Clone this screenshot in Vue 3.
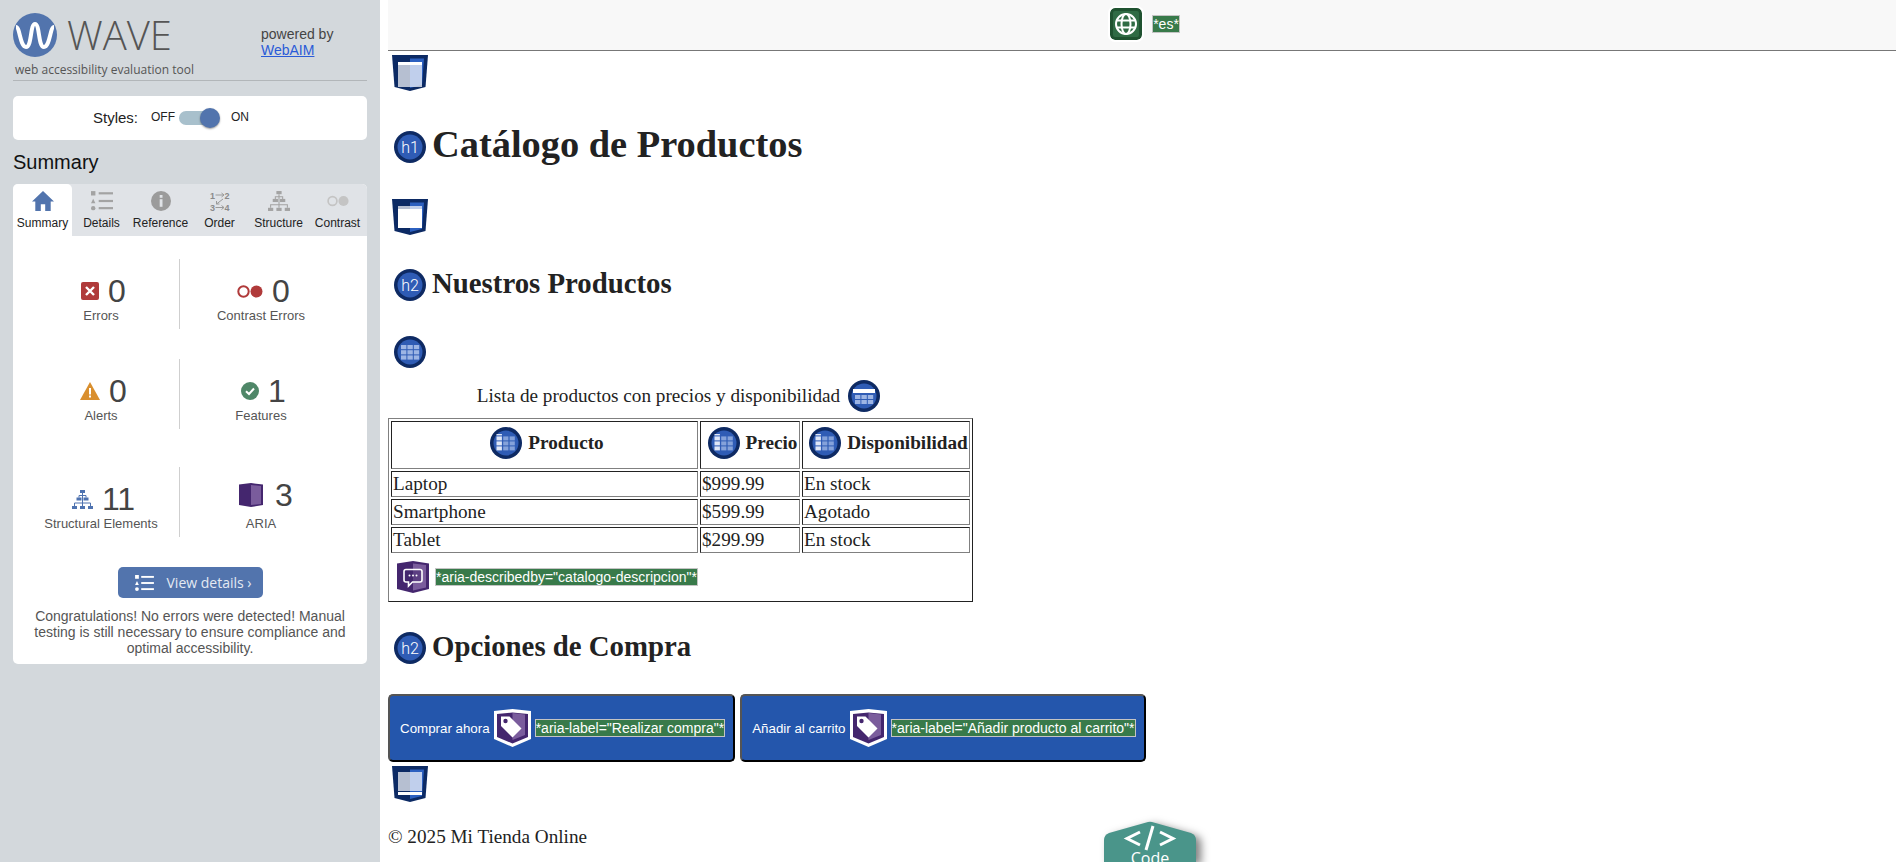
<script setup>
const tabs = [
  { label: 'Summary', icon: 'i-home', active: true },
  { label: 'Details', icon: 'i-list' },
  { label: 'Reference', icon: 'i-info' },
  { label: 'Order', icon: 'i-order' },
  { label: 'Structure', icon: 'i-tree' },
  { label: 'Contrast', icon: 'i-contrast' }
]
const stats = [
  { n: '0', label: 'Errors', icon: 'i-error', w: 18, h: 18 },
  { n: '0', label: 'Contrast Errors', icon: 'i-cerror', w: 26, h: 13 },
  { n: '0', label: 'Alerts', icon: 'i-alert', w: 20, h: 18 },
  { n: '1', label: 'Features', icon: 'i-feature', w: 18, h: 18 },
  { n: '11', label: 'Structural Elements', icon: 'i-tree-blue', w: 21, h: 19, last: true },
  { n: '3', label: 'ARIA', icon: 'i-aria', w: 24, h: 24, last: true, raised: true }
]
const rows = [
  ['Laptop', '$999.99', 'En stock'],
  ['Smartphone', '$599.99', 'Agotado'],
  ['Tablet', '$299.99', 'En stock']
]
const heads = [{ t: 'Producto', w: 305 }, { t: 'Precio', w: 98 }, { t: 'Disponibilidad', w: 166 }]
</script>

<template>
  <div class="page">
    <svg class="defs" width="0" height="0" aria-hidden="true">
      <defs>
        <symbol id="i-home" viewBox="0 0 20 18">
          <path d="M10 0L20 9.5H17V18H12V12H8V18H3V9.5H0Z" fill="#5274ad" />
        </symbol>
        <symbol id="i-list" viewBox="0 0 20 18" fill="#a3a3a3">
          <rect x="0" y="0" width="4" height="4" />
          <path d="M2 7L4 11H0Z" />
          <circle cx="2" cy="15.5" r="2" />
          <rect x="7" y="1" width="13" height="2" />
          <rect x="7" y="8" width="13" height="2" />
          <rect x="7" y="14.5" width="13" height="2" />
        </symbol>
        <symbol id="i-info" viewBox="0 0 20 20">
          <circle cx="10" cy="10" r="10" fill="#9b9b9b" />
          <rect x="8.7" y="4" width="2.8" height="2.8" fill="#e0e3e7" />
          <rect x="8.7" y="8.2" width="2.8" height="7.6" fill="#e0e3e7" />
        </symbol>
        <symbol id="i-order" viewBox="0 0 20 20">
          <text x="0" y="7.5" class="ord">1</text>
          <text x="14.5" y="7.5" class="ord">2</text>
          <text x="0" y="20" class="ord">3</text>
          <text x="14.5" y="20" class="ord">4</text>
          <path d="M5.5 4H14M11.5 2L14 4L11.5 6M5.5 16.5H14M11.5 14.5L14 16.5L11.5 18.5M13 8L6.5 13M6.5 10V13H9.5" fill="none" stroke="#9a9a9a" stroke-width="1" />
        </symbol>
        <symbol id="i-tree" viewBox="0 0 21 19">
          <g fill="#a3a3a3">
            <rect x="8" y="0" width="5" height="3" /><rect x="4.5" y="7.5" width="5" height="3" /><rect x="11.5" y="7.5" width="5" height="3" />
            <rect x="0" y="16" width="5" height="3" /><rect x="8" y="16" width="5" height="3" /><rect x="16" y="16" width="5" height="3" />
          </g>
          <path d="M10.5 3V16M7 7.5V5.5H14V7.5M2.5 16V13H18.5V16" fill="none" stroke="#a3a3a3" />
        </symbol>
        <symbol id="i-tree-blue" viewBox="0 0 21 19">
          <g fill="#4f73b0">
            <rect x="8" y="0" width="5" height="3" /><rect x="4.5" y="7.5" width="5" height="3" /><rect x="11.5" y="7.5" width="5" height="3" />
            <rect x="0" y="16" width="5" height="3" /><rect x="8" y="16" width="5" height="3" /><rect x="16" y="16" width="5" height="3" />
          </g>
          <path d="M10.5 3V16M7 7.5V5.5H14V7.5M2.5 16V13H18.5V16" fill="none" stroke="#4f73b0" />
        </symbol>
        <symbol id="i-contrast" viewBox="0 0 26 13">
          <circle cx="6.5" cy="6.5" r="5.2" fill="none" stroke="#c4c4c4" stroke-width="2" />
          <circle cx="19.5" cy="6.5" r="6" fill="#c4c4c4" />
        </symbol>
        <symbol id="i-error" viewBox="0 0 18 18">
          <rect width="18" height="18" rx="2" fill="#b03a3a" />
          <path d="M5 5L13 13M13 5L5 13" stroke="#fff" stroke-width="2.4" />
        </symbol>
        <symbol id="i-cerror" viewBox="0 0 26 13">
          <circle cx="6.5" cy="6.5" r="5.2" fill="none" stroke="#b03a3a" stroke-width="2" />
          <circle cx="19.5" cy="6.5" r="6" fill="#b03a3a" />
        </symbol>
        <symbol id="i-alert" viewBox="0 0 20 18">
          <path d="M10 0L20 18H0Z" fill="#d98f2e" />
          <rect x="9" y="6" width="2" height="6.5" fill="#fff" />
          <rect x="9" y="13.5" width="2" height="2" fill="#fff" />
        </symbol>
        <symbol id="i-feature" viewBox="0 0 18 18">
          <circle cx="9" cy="9" r="9" fill="#4f8768" />
          <path d="M5 9.2L8 12L13 6.5" fill="none" stroke="#fff" stroke-width="2" />
        </symbol>
        <symbol id="i-aria" viewBox="0 0 24 24">
          <path d="M0 1.5L12 0L24 1.5V22L12 24L0 22Z" fill="#44266e" />
          <path d="M12 2L22 3V21L12 22Z" fill="#7a5c9c" />
        </symbol>
        <symbol id="r-base" viewBox="0 0 36 36">
          <path d="M0 0H36L33.5 32L18 36L2.5 32Z" fill="#0c2a64" />
          <path d="M18 3.5H32L30 30L18 33Z" fill="#2c60c0" />
        </symbol>
        <symbol id="c-grid" viewBox="0 0 32 32">
          <circle cx="16" cy="16" r="16" fill="#0e2a63" />
          <circle cx="16" cy="16" r="12.5" fill="#2f5cb5" />
          <g fill="#9db5e4">
            <rect x="7" y="9" width="5.4" height="4.2" /><rect x="13.4" y="9" width="5.4" height="4.2" /><rect x="19.8" y="9" width="5.4" height="4.2" />
            <rect x="7" y="14.2" width="5.4" height="4.2" /><rect x="13.4" y="14.2" width="5.4" height="4.2" /><rect x="19.8" y="14.2" width="5.4" height="4.2" />
            <rect x="7" y="19.4" width="5.4" height="4.2" /><rect x="13.4" y="19.4" width="5.4" height="4.2" /><rect x="19.8" y="19.4" width="5.4" height="4.2" />
          </g>
        </symbol>
        <symbol id="c-cap" viewBox="0 0 32 32">
          <circle cx="16" cy="16" r="16" fill="#0e2a63" />
          <circle cx="16" cy="16" r="12.5" fill="#2f5cb5" />
          <rect x="5" y="9" width="22" height="4" fill="#fff" />
          <g fill="#9db5e4">
            <rect x="7" y="15" width="5.4" height="4" /><rect x="13.4" y="15" width="5.4" height="4" /><rect x="19.8" y="15" width="5.4" height="4" />
            <rect x="7" y="20" width="5.4" height="4" /><rect x="13.4" y="20" width="5.4" height="4" /><rect x="19.8" y="20" width="5.4" height="4" />
          </g>
        </symbol>
        <symbol id="c-th" viewBox="0 0 32 32">
          <circle cx="16" cy="16" r="16" fill="#0e2a63" />
          <circle cx="16" cy="16" r="12.5" fill="#2f5cb5" />
          <g fill="#dfe7f7">
            <rect x="6.5" y="7" width="5.4" height="1.4" /><rect x="6.5" y="9.4" width="5.4" height="4" /><rect x="6.5" y="14.4" width="5.4" height="4" /><rect x="6.5" y="19.4" width="5.4" height="4" />
          </g>
          <g fill="#85a2da">
            <rect x="13.2" y="9.4" width="5.2" height="4" /><rect x="19.6" y="9.4" width="5.2" height="4" />
            <rect x="13.2" y="14.4" width="5.2" height="4" /><rect x="19.6" y="14.4" width="5.2" height="4" />
            <rect x="13.2" y="19.4" width="5.2" height="4" /><rect x="19.6" y="19.4" width="5.2" height="4" />
          </g>
        </symbol>
        <symbol id="a-desc" viewBox="0 0 32 32">
          <path d="M0 2.5L16 0L32 2.5V28L16 32L0 28Z" fill="#44266e" />
          <path d="M16 2.5L29 4V26.5L16 29.5Z" fill="#7a5c9c" />
          <path d="M9 8.5H23A2 2 0 0 1 25 10.5V19A2 2 0 0 1 23 21H15.5L11.5 25V21H9A2 2 0 0 1 7 19V10.5A2 2 0 0 1 9 8.5Z" fill="#44266e" fill-opacity=".55" stroke="#fff" stroke-width="1.6" />
          <circle cx="12.5" cy="14.5" r="1" fill="#fff" /><circle cx="16" cy="14.5" r="1" fill="#fff" /><circle cx="19.5" cy="14.5" r="1" fill="#fff" />
        </symbol>
        <symbol id="a-tag" viewBox="0 0 39 38">
          <path d="M1 2L19.5 0L38 2V30L19.5 38L1 30Z" fill="#fff" />
          <path d="M4 5L19.5 3.5L35 5V28L19.5 34.5L4 28Z" fill="#44266e" />
          <path d="M19.5 4L32 5.5V26L19.5 31Z" fill="#7a5c9c" />
          <path d="M8 7.5H16.5L28.5 19.5L19.5 28.5L8 17Z" fill="#fff" />
          <circle cx="12.5" cy="12" r="2.2" fill="#44266e" />
        </symbol>
      </defs>
    </svg>

    <aside class="side">
      <div class="brand">
        <div class="brand-logo">
          <div class="logo-row">
            <svg class="logo" width="44" height="44" viewBox="0 0 44 44">
              <circle cx="22" cy="22" r="22" fill="#5274ad" />
              <path d="M3 14C7 14 7 34 13 34C19 34 17 11 22 11C27 11 25 34 31 34C37 34 37 14 41 14" fill="none" stroke="#fff" stroke-width="4" />
            </svg>
            <span class="wave">WAVE</span>
          </div>
          <div class="tagline">web accessibility evaluation tool</div>
        </div>
        <div class="powered">powered by<br /><a href="#">WebAIM</a></div>
      </div>

      <div class="styles-card">
        <span class="st-label">Styles:</span>
        <span class="st-off">OFF</span>
        <span class="toggle"><span class="knob"></span></span>
        <span class="st-on">ON</span>
      </div>

      <h2 class="summary-title">Summary</h2>

      <div class="card">
        <div class="tabs">
          <div v-for="t in tabs" :key="t.label" class="tab" :class="{ active: t.active }">
            <svg class="tab-icon" width="22" height="20"><use :href="'#' + t.icon" /></svg>
            <span>{{ t.label }}</span>
          </div>
        </div>
        <div class="stats">
          <div v-for="s in stats" :key="s.label" class="stat" :class="{ last: s.last }">
            <div class="stat-top" :class="{ raised: s.raised }">
              <svg :width="s.w" :height="s.h"><use :href="'#' + s.icon" /></svg>
              <span class="num">{{ s.n }}</span>
            </div>
            <div class="stat-label">{{ s.label }}</div>
          </div>
        </div>
        <div class="btn-wrap">
          <button class="view-btn" type="button">
            <svg width="19" height="16" viewBox="0 0 20 17" fill="#fff">
              <rect x="0" y="0" width="4" height="4" />
              <path d="M2 6.5L4 10.5H0Z" />
              <circle cx="2" cy="15" r="2" />
              <rect x="6.5" y="1" width="13.5" height="2" />
              <rect x="6.5" y="7.5" width="13.5" height="2" />
              <rect x="6.5" y="14" width="13.5" height="2" />
            </svg>
            <span>View details ›</span>
          </button>
        </div>
        <p class="congrats">Congratulations! No errors were detected! Manual testing is still necessary to ensure compliance and optimal accessibility.</p>
      </div>
    </aside>

    <main class="main">
      <div class="topbar">
        <span class="globe">
          <svg width="24" height="24" viewBox="0 0 24 24" fill="none" stroke="#fff" stroke-width="2">
            <circle cx="12" cy="12" r="10" />
            <ellipse cx="12" cy="12" rx="4.5" ry="10" />
            <path d="M2.5 8.5H21.5M2.5 15.5H21.5" />
          </svg>
        </span>
        <span class="badge">*es*</span>
      </div>

      <svg class="region first" width="36" height="36" viewBox="0 0 36 36">
        <use href="#r-base" />
        <rect x="6" y="10" width="24" height="22" fill="#fff" fill-opacity=".7" />
        <rect x="6" y="7" width="24" height="3" fill="#fff" />
      </svg>

      <h1 class="h1"><svg class="hicon" width="32" height="32" viewBox="0 0 32 32">
        <circle cx="16" cy="16" r="16" fill="#0e2a63" /><circle cx="16" cy="16" r="12.5" fill="#2f5cb5" />
        <text x="16" y="21.5" text-anchor="middle" class="ht">h1</text>
      </svg><span>Catálogo de Productos</span></h1>

      <svg class="region" width="36" height="36" viewBox="0 0 36 36">
        <use href="#r-base" />
        <rect x="6" y="7" width="24" height="3" fill="#fff" fill-opacity=".7" />
        <rect x="6" y="10" width="24" height="19" fill="#fff" />
      </svg>

      <h2 class="h2 h2a"><svg class="hicon" width="32" height="32" viewBox="0 0 32 32">
        <circle cx="16" cy="16" r="16" fill="#0e2a63" /><circle cx="16" cy="16" r="12.5" fill="#2f5cb5" />
        <text x="16" y="21.5" text-anchor="middle" class="ht">h2</text>
      </svg><span>Nuestros Productos</span></h2>

      <svg class="ticon" width="32" height="32"><use href="#c-grid" /></svg>
      <div class="caption">
        <span>Lista de productos con precios y disponibilidad</span>
        <svg width="32" height="32"><use href="#c-cap" /></svg>
      </div>

      <table class="table">
        <colgroup>
          <col v-for="h in heads" :key="h.t" :style="{ width: h.w + 2 + 'px' }" />
        </colgroup>
        <tbody>
          <tr>
            <th v-for="h in heads" :key="h.t">
              <span class="th-in"><svg width="32" height="32"><use href="#c-th" /></svg><span>{{ h.t }}</span></span>
            </th>
          </tr>
          <tr v-for="r in rows" :key="r[0]">
            <td v-for="c in r" :key="c">{{ c }}</td>
          </tr>
          <tr>
            <td colspan="3" class="desc-cell">
              <span class="desc">
                <svg width="32" height="32"><use href="#a-desc" /></svg>
                <span class="badge">*aria-describedby="catalogo-descripcion"*</span>
              </span>
            </td>
          </tr>
        </tbody>
      </table>

      <h2 class="h2 h2b"><svg class="hicon" width="32" height="32" viewBox="0 0 32 32">
        <circle cx="16" cy="16" r="16" fill="#0e2a63" /><circle cx="16" cy="16" r="12.5" fill="#2f5cb5" />
        <text x="16" y="21.5" text-anchor="middle" class="ht">h2</text>
      </svg><span>Opciones de Compra</span></h2>

      <div class="buttons">
        <button class="buy" type="button">
          <span>Comprar ahora</span>
          <svg width="39" height="38"><use href="#a-tag" /></svg>
          <span class="badge">*aria-label="Realizar compra"*</span>
        </button>
        <button class="buy" type="button">
          <span>Añadir al carrito</span>
          <svg width="39" height="38"><use href="#a-tag" /></svg>
          <span class="badge">*aria-label="Añadir producto al carrito"*</span>
        </button>
      </div>

      <svg class="region foot" width="36" height="36" viewBox="0 0 36 36">
        <use href="#r-base" />
        <rect x="6" y="6" width="24" height="19" fill="#fff" fill-opacity=".7" />
        <rect x="6" y="26" width="24" height="3" fill="#fff" />
      </svg>

      <p class="copy">© 2025 Mi Tienda Online</p>

      <div class="code-tab">
        <svg class="code-shape" width="92" height="40" viewBox="0 0 92 40">
          <path d="M0 18Q0 13 5 11L44 0Q46 -.5 48 0L87 11Q92 13 92 18V40H0Z" fill="#4a958a" />
          <path d="M36 10L23 16.5L36 23M56 10L69 16.5L56 23M49 4L42 28" fill="none" stroke="#fff" stroke-width="3" />
        </svg>
        <span class="code-label">Code</span>
      </div>
    </main>
  </div>
</template>

<style scoped>
.page { display: flex; width: 1896px; height: 862px; overflow: hidden; background: #fff; font-family: "Liberation Serif", serif; color: #222; }
.defs { position: absolute; }
.ord { font: bold 9px "Liberation Sans", sans-serif; fill: #8a8a8a; }

.side { width: 380px; flex: none; box-sizing: border-box; background: #d3d8dc; padding: 13px 13px 0; font-family: "Liberation Sans", sans-serif; }
.brand { display: flex; height: 67px; border-bottom: 1px solid #b2b6b9; }
.brand-logo { width: 248px; flex: none; }
.logo-row { display: flex; align-items: center; height: 44px; }
.logo { flex: none; }
.wave { font: 300 40px/44px "Open Sans", sans-serif; color: #555; margin-left: 10px; }
.tagline { font: 12px/16px "Open Sans", sans-serif; color: #555; margin: 5px 0 0 2px; white-space: nowrap; }
.powered { font-size: 14px; line-height: 16px; color: #444; padding-top: 13px; }
.powered a { color: #2a5bd7; }

.styles-card { display: flex; align-items: center; height: 44px; margin-top: 15px; padding-left: 80px; background: #fff; border-radius: 5px; color: #222; }
.st-label { font-size: 15px; margin: 0 13px 2px 0; }
.st-off, .st-on { font-size: 12px; margin-bottom: 2px; }
.st-off { margin-right: 4px; }
.toggle { position: relative; width: 36px; height: 14px; border-radius: 7px; background: #a8c0cc; }
.knob { position: absolute; left: 21px; top: -3px; width: 20px; height: 20px; border-radius: 50%; background: #5274ad; box-shadow: 0 1px 2px rgba(0,0,0,.4); }
.st-on { margin-left: 16px; }

.summary-title { margin: 10px 0; font-size: 20px; line-height: 24px; font-weight: 400; color: #111; }

.card { background: #fff; border-radius: 5px; }
.tabs { display: grid; grid-template-columns: repeat(6, 1fr); height: 52px; background: #e0e3e7; border-radius: 5px 5px 0 0; }
.tab { display: flex; flex-direction: column; align-items: center; padding-top: 7px; font-size: 12px; line-height: 14px; color: #222; }
.tab.active { background: #fff; border-radius: 5px 5px 0 0; }
.tab-icon { margin-bottom: 5px; }

.stats { display: grid; grid-template-columns: 167px 187px; row-gap: 30px; padding-top: 23px; }
.stat { display: flex; flex-direction: column; align-items: center; height: 70px; box-sizing: border-box; padding-top: 16px; }
.stat:nth-child(odd) { padding-left: 10px; border-right: 1px solid #cfcfcf; }
.stat:nth-child(even) { padding-right: 25px; }
.stat.last { margin-top: 8px; }
.stat-top { display: flex; align-items: center; gap: 9px; height: 32px; padding-left: 5px; }
.stat-top.raised { position: relative; top: -4px; gap: 12px; padding-left: 10px; }
.num { font-size: 32px; line-height: 32px; color: #444; }
.stat-label { font-size: 13px; line-height: 16px; color: #555; margin-top: 1px; white-space: nowrap; }

.btn-wrap { display: flex; justify-content: center; margin-top: 30px; }
.view-btn { display: flex; align-items: center; gap: 13px; width: 145px; height: 31px; box-sizing: border-box; padding: 0 0 0 17px; border: 0; border-radius: 5px; background: #5274ad; color: #e4eaf3; font: 14px "Open Sans", sans-serif; }
.congrats { margin: 10px 0 0; padding: 0 14px 8px; text-align: center; font-size: 14px; line-height: 16px; color: #555; }

.main { position: relative; flex: 1; min-width: 0; padding-left: 8px; font-size: 19.2px; }
.topbar { display: flex; align-items: center; justify-content: center; gap: 10px; height: 48px; padding: 0 0 2px 6px; background: #f8f8f8; border-bottom: 1px solid #777; }
.globe { display: flex; align-items: center; justify-content: center; width: 32px; height: 32px; box-sizing: border-box; border-radius: 5px; background: #2f6b44; border: 3px solid #1f5230; outline: 2px solid #fff; }
.badge { display: inline-block; background: #387a4a; color: #fff; border: 1px solid #c4c4c4; font: 14px/16px "Liberation Sans", sans-serif; white-space: nowrap; }

.region { display: block; margin: 36px 0 0 4px; }
.region.first { margin-top: 4px; }
.region.foot { margin-top: 4px; }
.h1 { display: flex; align-items: center; gap: 6px; height: 32px; margin: 40px 0 36px 6px; font-size: 38.4px; line-height: 32px; font-weight: 700; color: #222; }
.h1 span { margin-bottom: 7px; }
.h2 { display: flex; align-items: center; gap: 6px; height: 32px; margin: 0 0 0 6px; font-size: 28.8px; line-height: 32px; font-weight: 700; color: #222; }
.h2 span { margin-bottom: 5px; }
.h2a { margin-top: 34px; }
.h2b { margin-top: 30px; }
.hicon { flex: none; }
.ht { font: 300 16px "Roboto", sans-serif; fill: #fff; }

.ticon { display: block; margin: 35px 0 0 6px; }
.caption { display: flex; align-items: center; justify-content: center; gap: 8px; width: 585px; height: 32px; margin-top: 12px; box-sizing: border-box; padding-right: 4px; }

.table { width: 585px; margin-top: 6px; border-collapse: separate; border-spacing: 2px; table-layout: fixed; border: 1px solid; border-color: #808080 #222 #222 #808080; box-sizing: border-box; font-size: 19.2px; }
.table th, .table td { padding: 1px; border: 1px solid; border-color: #222 #808080 #808080 #222; line-height: 22px; text-align: left; }
.table th { height: 44px; padding: 1px 1px 1px 6px; text-align: center; white-space: nowrap; }
.th-in { display: inline-flex; align-items: center; gap: 6px; }
.table td.desc-cell { border: 0; padding: 0; height: 44px; }
.desc { display: flex; align-items: center; gap: 6px; padding-left: 6px; }

.buttons { display: flex; gap: 5px; margin: 30px 0 0; }
.buy { display: flex; align-items: center; gap: 3px; height: 68px; box-sizing: border-box; padding: 0 8px 0 10px; background: #2456ac; color: #fff; border: 2px solid; border-color: #555 #000 #000 #555; border-radius: 5px; font: 13.333px "Liberation Sans", sans-serif; }

.copy { margin: 24px 0 0; font-size: 19.2px; line-height: 21px; color: #222; }

.code-tab { position: absolute; left: 724px; top: 822px; width: 92px; height: 40px; }
.code-shape { display: block; overflow: visible; filter: drop-shadow(5px 3px 4px rgba(0,0,0,.5)); }
.code-label { position: absolute; left: 0; right: 0; top: 27px; text-align: center; font: 16px/18px "Open Sans", sans-serif; color: #fff; }
</style>

<style>
html, body { margin: 0; overflow: hidden; background: #fff; }
</style>
